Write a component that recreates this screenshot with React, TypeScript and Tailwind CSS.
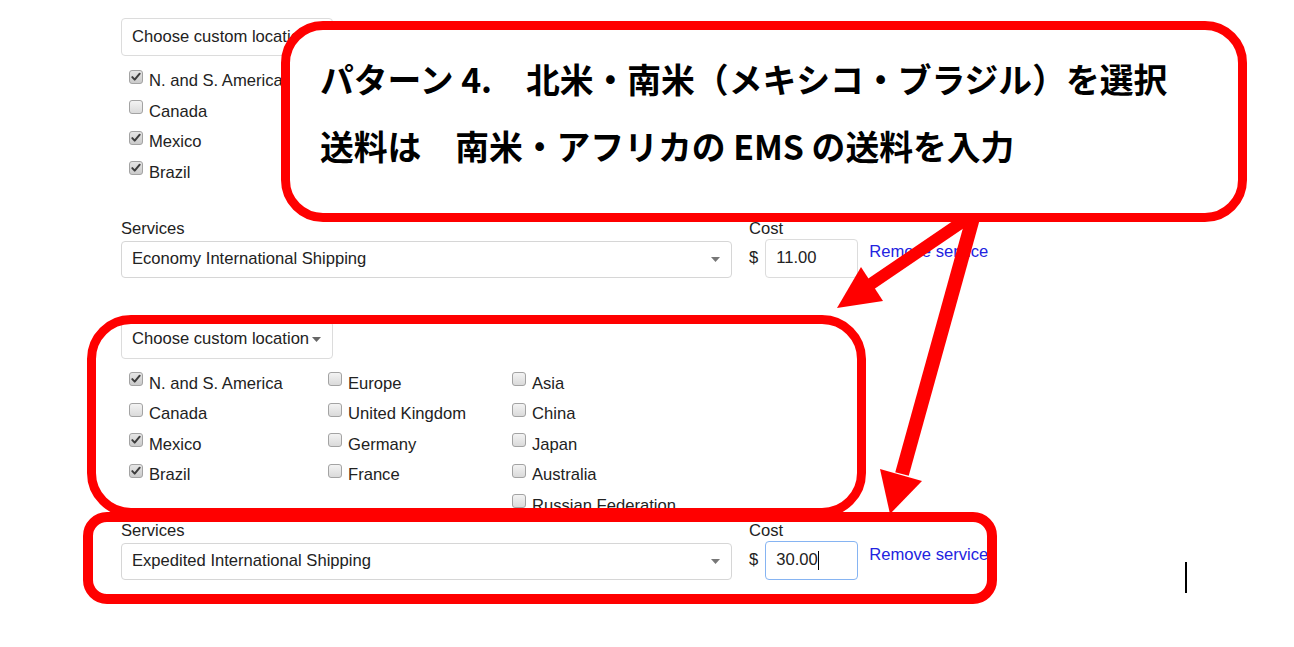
import React from "react";

type Loc = { label: string; checked: boolean };

function Checkbox({ checked }: { checked: boolean }) {
  return (
    <svg width="14" height="14" viewBox="0 0 14 14" className="mt-[3.5px] shrink-0">
      <defs>
        <linearGradient id={checked ? "cbg1" : "cbg0"} x1="0" y1="0" x2="0" y2="1">
          <stop offset="0" stopColor={checked ? "#e6e6e6" : "#f4f4f4"} />
          <stop offset="1" stopColor={checked ? "#c9c9c9" : "#d9d9d9"} />
        </linearGradient>
      </defs>
      <rect x="0.5" y="0.5" width="13" height="13" rx="2.5" fill={`url(#${checked ? "cbg1" : "cbg0"})`} stroke="#a3a3a3" />
      {checked && (
        <path d="M3.3 7.1 L5.7 9.6 L10.7 3.7" fill="none" stroke="#3c3c3c" strokeWidth="2" strokeLinecap="round" strokeLinejoin="round" />
      )}
    </svg>
  );
}

function Row({ item }: { item: Loc }) {
  return (
    <div className="flex items-start h-[30.5px] gap-[6px] leading-[30.5px]">
      <Checkbox checked={item.checked} />
      <span className="whitespace-nowrap">{item.label}</span>
    </div>
  );
}

function Caret({ color }: { color: string }) {
  return (
    <svg width="9" height="5" viewBox="0 0 9 5" className="shrink-0">
      <path d="M0 0 L9 0 L4.5 5 Z" fill={color} />
    </svg>
  );
}

function Section({
  col1,
  service,
  cost,
  focused,
  showAll,
  className,
}: {
  col1: Loc[];
  service: string;
  cost: string;
  focused?: boolean;
  showAll?: boolean;
  className?: string;
}) {
  const col2: Loc[] = [
    { label: "Europe", checked: false },
    { label: "United Kingdom", checked: false },
    { label: "Germany", checked: false },
    { label: "France", checked: false },
  ];
  const col3: Loc[] = [
    { label: "Asia", checked: false },
    { label: "China", checked: false },
    { label: "Japan", checked: false },
    { label: "Australia", checked: false },
    { label: "Russian Federation", checked: false },
  ];
  return (
    <div className={className}>
      <div className="inline-flex h-[38px] items-center gap-[3px] border border-[#dcdcdc] rounded-[4px] pl-[10px] pr-[11px]">
        <span>Choose custom location</span>
        <Caret color="#666" />
      </div>
      <div className="flex mt-[10px]">
        <div className="w-[199px] pl-[8px] flex flex-col">
          {col1.map((c) => (
            <Row key={c.label} item={c} />
          ))}
          <div className="h-[30.5px]" />
        </div>
        {showAll && (
          <>
            <div className="w-[184px] pl-[8px] flex flex-col">
              {col2.map((c) => (
                <Row key={c.label} item={c} />
              ))}
            </div>
            <div className="pl-[8px] flex flex-col">
              {col3.map((c) => (
                <Row key={c.label} item={c} />
              ))}
            </div>
          </>
        )}
      </div>
      <div className="flex items-start">
        <div className="w-[611px]">
          <div className="h-[20px] leading-[20px]">Services</div>
          <div className="mt-[2px] h-[37px] border border-[#d6d6d6] rounded-[4px] flex items-center justify-between pl-[10px] pr-[11px]">
            <span>{service}</span>
            <Caret color="#777" />
          </div>
        </div>
        <div className="ml-[17px]">
          <div className="h-[20px] leading-[20px]">Cost</div>
          <div className="flex items-center">
            <span>$</span>
            <div
              className={
                focused
                  ? "ml-[7px] w-[93px] h-[39px] rounded-[4px] border-[1.5px] border-[#86b4f2] flex items-center pl-[10px]"
                  : "ml-[7px] w-[93px] h-[39px] rounded-[4px] border border-[#dcdcdc] flex items-center pl-[10px]"
              }
            >
              <span>{cost}</span>
              {focused && <span className="inline-block w-[1px] h-[19px] bg-black" />}
            </div>
          </div>
        </div>
        <a className="ml-[11px] mt-[23.5px] leading-[20px] text-[#2323e0] whitespace-nowrap">Remove service</a>
      </div>
    </div>
  );
}

export default function App() {
  const top: Loc[] = [
    { label: "N. and S. America", checked: true },
    { label: "Canada", checked: false },
    { label: "Mexico", checked: true },
    { label: "Brazil", checked: true },
  ];
  return (
    <div className="relative w-[1294px] h-[647px] overflow-hidden bg-white text-[#222] text-[16.6px] font-['Liberation_Sans',Arial,sans-serif]">
      <div className="pl-[121px] pt-[18px]">
        <Section col1={top} service="Economy International Shipping" cost="11.00" />
        <Section
          className="mt-[43px]"
          col1={top}
          service="Expedited International Shipping"
          cost="30.00"
          focused
          showAll
        />
      </div>

      {/* Callout */}
      <div className="absolute left-[281px] top-[21px] w-[966px] h-[201px] border-[9px] border-[#ff0000] rounded-[42px] bg-white pl-[30px] pt-[15px] text-black font-bold text-[33.8px] leading-[67px] font-['Noto_Sans_CJK_JP',sans-serif] whitespace-nowrap">
        <div>パターン 4.　北米・南米（メキシコ・ブラジル）を選択</div>
        <div>送料は　南米・アフリカの EMS の送料を入力</div>
      </div>

      {/* Highlight boxes */}
      <div className="absolute left-[87px] top-[315px] w-[779px] h-[202px] border-[9px] border-[#ff0000] rounded-[44px] pointer-events-none" />
      <div className="absolute left-[83px] top-[512px] w-[914px] h-[92px] border-[10px] border-[#ff0000] rounded-[24px] pointer-events-none" />

      {/* Arrows */}
      <svg className="absolute inset-0 pointer-events-none" width="1294" height="647" viewBox="0 0 1294 647">
        <line x1="968" y1="218" x2="868" y2="286" stroke="#ff0000" strokeWidth="12" />
        <polygon points="837,308 861,267 883,301" fill="#ff0000" />
        <line x1="973" y1="218" x2="902" y2="474" stroke="#ff0000" strokeWidth="14" />
        <polygon points="890,514 880,469 922,481" fill="#ff0000" />
      </svg>

      {/* Text cursor */}
      <div className="absolute left-[1185px] top-[562px] w-[2px] h-[31px] bg-black" />
    </div>
  );
}
